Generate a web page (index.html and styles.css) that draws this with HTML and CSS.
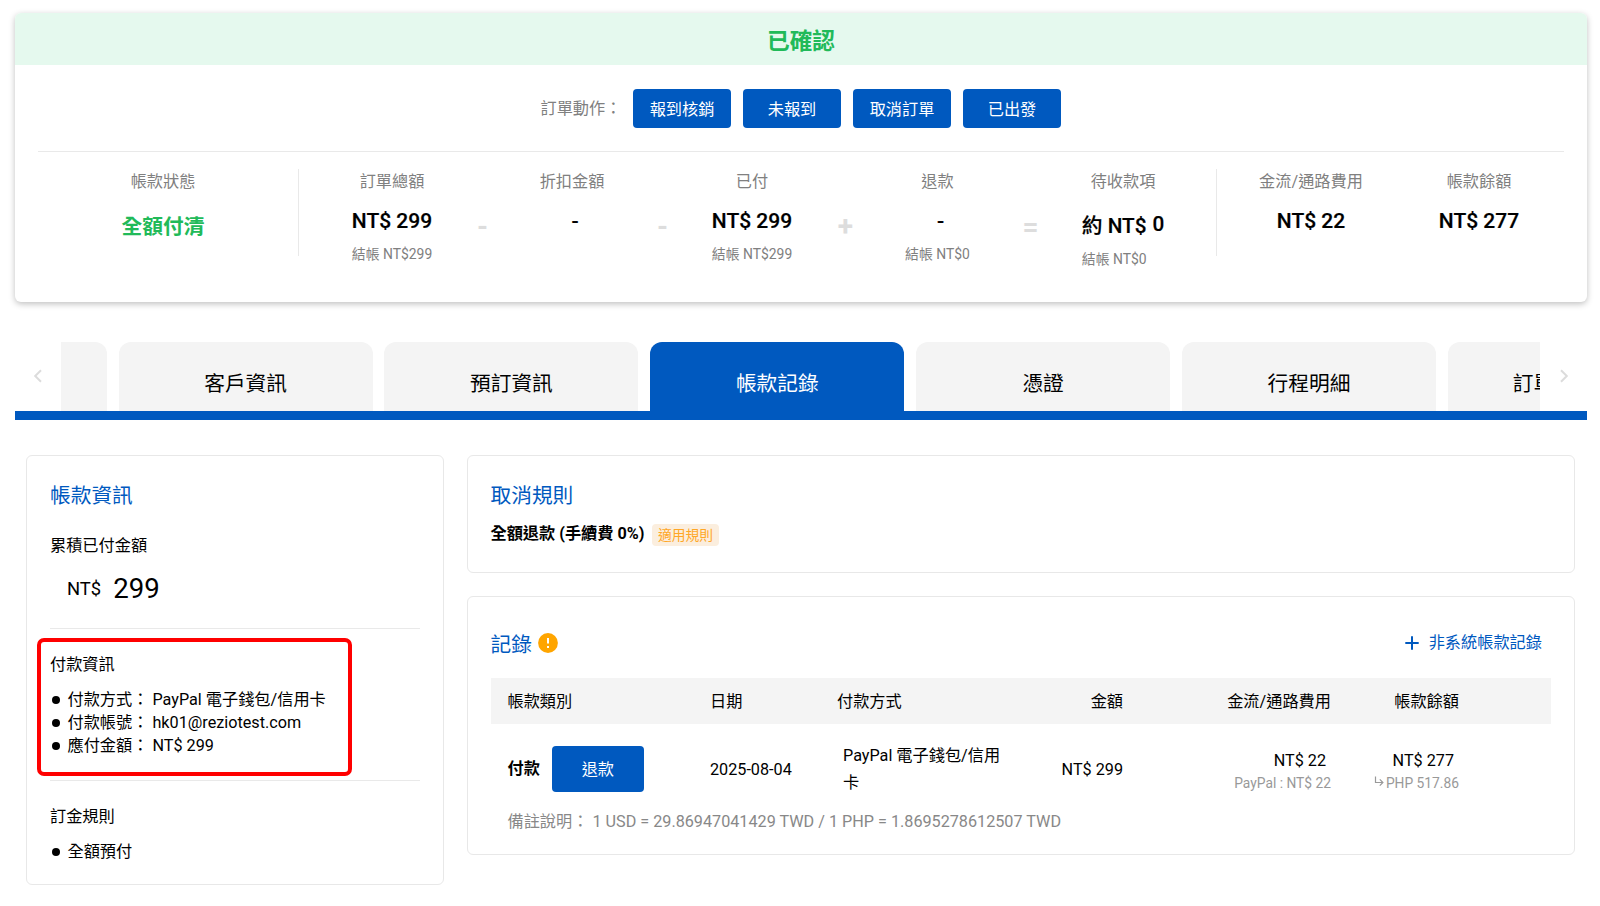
FILE: index.html
```
<!DOCTYPE html>
<html lang="zh-Hant">
<head>
<meta charset="utf-8">
<title>訂單</title>
<link rel="stylesheet" href="styles.css">
</head>
<body>
<section class="summary">
  <div class="summary-head">已確認</div>
  <div class="actions">
    <span class="actions-label">訂單動作：</span>
    <button class="btn">報到核銷</button>
    <button class="btn">未報到</button>
    <button class="btn">取消訂單</button>
    <button class="btn">已出發</button>
  </div>
  <div class="figures">
    <div class="fig status"><div class="lbl">帳款狀態</div><div class="state">全額付清</div></div>
    <div class="rule"></div>
    <div class="fig"><div class="lbl">訂單總額</div><div class="num">NT$ 299</div><div class="sub">結帳 NT$299</div></div>
    <div class="op">-</div>
    <div class="fig"><div class="lbl">折扣金額</div><div class="num dash">-</div></div>
    <div class="op">-</div>
    <div class="fig"><div class="lbl">已付</div><div class="num">NT$ 299</div><div class="sub">結帳 NT$299</div></div>
    <div class="op">+</div>
    <div class="fig"><div class="lbl">退款</div><div class="num dash">-</div><div class="sub">結帳 NT$0</div></div>
    <div class="op">=</div>
    <div class="fig due"><div class="lbl">待收款項</div><div class="due-body"><div class="due-num"><span>約 NT$</span><span class="due-zero">0</span></div><div class="sub">結帳 NT$0</div></div></div>
    <div class="rule"></div>
    <div class="fig"><div class="lbl">金流/通路費用</div><div class="num">NT$ 22</div></div>
    <div class="fig"><div class="lbl">帳款餘額</div><div class="num">NT$ 277</div></div>
  </div>
</section>

<nav class="tabs">
  <svg class="chev" viewBox="0 0 10 14"><path d="M8 1.2 2.2 7 8 12.8"/></svg>
  <div class="tab-view">
    <div class="tab cut-left"></div>
    <div class="tab">客戶資訊</div>
    <div class="tab">預訂資訊</div>
    <div class="tab active">帳款記錄</div>
    <div class="tab">憑證</div>
    <div class="tab">行程明細</div>
    <div class="tab cut-right">訂單</div>
  </div>
  <svg class="chev" viewBox="0 0 10 14"><path d="M2 1.2 7.8 7 2 12.8"/></svg>
</nav>

<main class="content">
  <aside class="card info">
    <h2 class="title">帳款資訊</h2>
    <div class="info-label">累積已付金額</div>
    <div class="paid"><span class="cur">NT$</span><span class="amt">299</span></div>
    <section class="block pay">
      <div class="info-label">付款資訊</div>
      <ul class="list">
        <li>付款方式： PayPal 電子錢包/信用卡</li>
        <li>付款帳號： hk01@reziotest.com</li>
        <li>應付金額： NT$ 299</li>
      </ul>
      <div class="highlight"></div>
    </section>
    <section class="block deposit">
      <div class="info-label">訂金規則</div>
      <ul class="list"><li>全額預付</li></ul>
    </section>
  </aside>
  <div class="right">
    <section class="card cancel">
      <h2 class="title">取消規則</h2>
      <div class="policy"><span class="policy-text">全額退款 (手續費 0%)</span><span class="tag">適用規則</span></div>
    </section>
    <section class="card records">
      <div class="rec-head">
        <h2 class="title">記錄</h2>
        <svg class="warn" viewBox="0 0 20 20"><circle cx="10" cy="10" r="9.9" fill="#ffa500"/><path d="M10 5v5.6M10 13.1v2" stroke="#fff" stroke-width="2"/></svg>
        <a class="add"><svg class="plus" viewBox="0 0 14 14"><path d="M7 .3v13.4M.3 7h13.4"/></svg>非系統帳款記錄</a>
      </div>
      <div class="row thead">
        <div>帳款類別</div><div>日期</div><div>付款方式</div><div class="r">金額</div><div class="r">金流/通路費用</div><div class="r">帳款餘額</div>
      </div>
      <div class="row line">
        <div class="kind"><b>付款</b><button class="btn refund">退款</button></div>
        <div class="date">2025-08-04</div>
        <div class="method">PayPal 電子錢包/信用卡</div>
        <div class="r date">NT$ 299</div>
        <div class="r pair"><div class="main">NT$ 22</div><div class="small">PayPal : NT$ 22</div></div>
        <div class="r pair"><div class="main">NT$ 277</div><div class="small"><svg class="turn" viewBox="0 0 10 11"><path d="M1.5 .5V6.5H8.6M5.8 3.4 8.9 6.5 5.8 9.6"/></svg>PHP 517.86</div></div>
      </div>
      <div class="note">備註說明： 1 USD = 29.86947041429 TWD / 1 PHP = 1.8695278612507 TWD</div>
    </section>
  </div>
</main>
</body>
</html>
```
FILE: styles.css
```
* { box-sizing: border-box; }
body {
  margin: 0;
  padding: 13px 13px 0 15px;
  height: 906px;
  overflow: hidden;
  background: #fff;
  color: #000;
  font-family: Roboto, "Noto Sans CJK TC", sans-serif;
  font-size: 16.2px;
  line-height: 24px;
}
h2 { margin: 0; font-weight: 400; }

.summary {
  height: 288.5px;
  border-radius: 6px;
  overflow: hidden;
  box-shadow: 0 2px 6px rgba(0, 0, 0, .25);
}
.summary-head {
  height: 52.4px;
  background: #e5f9ee;
  color: #21ba59;
  font-size: 22.7px;
  font-weight: 700;
  line-height: 57px;
  text-align: center;
}
.actions {
  display: flex;
  align-items: center;
  gap: 12px;
  margin: 0 23px;
  padding-left: 502px;
  height: 86.6px;
  border-bottom: 1px solid #e9e9e9;
}
.actions-label { width: 81px; padding: 2px 0 0 .5px; color: #808080; white-space: nowrap; }
.btn {
  width: 98px;
  height: 39px;
  padding: 1px 0 0;
  border: 0;
  border-radius: 4px;
  background: #0059bf;
  color: #fff;
  font: inherit;
  line-height: 39px;
}
.figures {
  display: grid;
  grid-template-columns: 270px 1px 140px 40px 140px 40px 140px 46px 139px 46px 140px 1px 140px 140px;
  margin-left: 13px;
  padding-top: 17px;
}
.figures > :nth-child(3) { margin-left: 23px; margin-right: -23px; }
.figures > :nth-child(n+4):nth-child(-n+11) { margin-left: 23px; margin-right: -23px; }
.figures > :nth-child(12) { margin-left: 46px; }
.figures > :nth-child(13) { margin-left: 70px; margin-right: -70px; }
.figures > :nth-child(14) { margin-left: 98px; margin-right: -98px; }
.fig { display: flex; flex-direction: column; align-items: center; padding-top: 1px; }
.lbl { height: 24px; color: #808080; white-space: nowrap; }
.state { margin-top: 19px; color: #21ba59; font-size: 20.7px; font-weight: 700; line-height: 28px; }
.num { margin-top: 13px; font-size: 21px; font-weight: 500; line-height: 28px; color: #000; -webkit-text-stroke: .2px #000; }
.dash { padding-left: 6px; }
.sub { margin-top: 8px; color: #808080; font-size: 13.9px; line-height: 22px; }
.rule { width: 1px; height: 87px; background: #e9e9e9; }
.op { padding: 44px 0 0 1px; color: #ddd; font-size: 28px; font-weight: 700; line-height: 28px; text-align: center; }
.due-num { display: flex; margin-top: 18px; font-size: 20.7px; font-weight: 500; line-height: 28px; color: #000; -webkit-text-stroke: .2px #000; }
.due .sub { margin-top: 8px; }
.due-zero { margin: -2px 0 0 6px; }

.tabs {
  display: flex;
  align-items: flex-start;
  justify-content: space-between;
  height: 78px;
  margin-top: 40.5px;
  padding: 0 18px;
  border-bottom: 9px solid #0059bf;
}
.chev { width: 10px; height: 14px; margin-top: 27px; fill: none; stroke: #dcdcdc; stroke-width: 2; }
.tab-view { display: flex; gap: 11.85px; width: 1479.5px; height: 69px; overflow: hidden; margin-right: 1px; }
.tab {
  flex: none;
  width: 254px;
  border-radius: 12px 12px 0 0;
  background: #f4f4f4;
  font-size: 20.7px;
  line-height: 85px;
  text-align: center;
}
.tab.active { background: #0059bf; color: #fff; }
.tab.cut-left { width: 46px; border-top-left-radius: 0; }
.tab.cut-right { padding-left: 65px; text-align: left; }

.content { display: flex; gap: 23px; align-items: flex-start; margin: 35px 12px 0 11px; }
.card { border: 1px solid #e8e8e8; border-radius: 6px; padding: 0 23px; }
.title { color: #0059bf; font-size: 20.7px; line-height: 30px; }
.info { width: 417.5px; height: 430px; padding-top: 25px; }
.info .info-label { margin-top: 23px; }
.paid { display: flex; align-items: center; gap: 12px; height: 57px; padding: 4px 0 0 17px; line-height: 40px; }
.cur { font-size: 18.4px; }
.amt { font-size: 27.6px; }
.block { position: relative; border-top: 1px solid #e9e9e9; }
.pay { height: 152px; margin-top: 13px; }
.pay .info-label, .deposit .info-label { margin-top: 24px; }
.list { list-style: none; margin: 11px 0 0; padding: 0; line-height: 23px; }
.list li { display: flex; align-items: center; white-space: pre; }
.list li::before { content: ""; width: 8px; height: 8px; margin: 0 8px 0 1.5px; border-radius: 50%; background: #000; }
.highlight { position: absolute; left: -13px; top: 9px; width: 315px; height: 138px; border: 4px solid #f00; border-radius: 7px; }

.right { flex: 1; }
.cancel { height: 118px; padding-top: 25px; }
.policy { display: flex; align-items: center; margin-top: 10px; }
.policy-text { font-weight: 700; }
.tag { height: 22px; margin: 3px 0 0 8px; padding: 0 5.5px; border-radius: 4px; background: #fbeede; color: #ffa726; font-size: 13.8px; line-height: 22px; }
.records { height: 259px; margin-top: 23px; padding-top: 33px; }
.rec-head { display: flex; align-items: center; height: 30px; margin-bottom: 18px; }
.warn { width: 20px; height: 20px; margin: -4px 0 0 6px; }
.add { display: flex; align-items: center; gap: 10px; margin: -4px 9px 0 auto; color: #0059bf; }
.plus { width: 14px; height: 14px; fill: none; stroke: #0059bf; stroke-width: 2; }
.row {
  display: grid;
  grid-template-columns: 202.5px 127px 180px 106px 208px 128px;
  align-items: center;
  padding-left: 17px;
}
.thead { height: 46px; padding-top: 2px; background: #f4f4f4; }
.r { text-align: right; }
.line { height: 90px; }
.kind { display: flex; align-items: center; gap: 12px; }
.kind b { font-weight: 700; }
.refund { width: 92px; height: 46px; line-height: 46px; }
.date { padding-top: 1px; }
.method { margin-left: 6px; margin-top: -1px; width: 160px; line-height: 27px; }
.pair { padding-top: 6px; }
.pair .main { padding-right: 5px; line-height: 22px; }
.small { color: #999; font-size: 13.8px; line-height: 22px; }
.turn { width: 10px; height: 11px; margin-right: 2px; fill: none; stroke: #999; stroke-width: 1.2; vertical-align: 1px; }
.note { margin-left: 17px; margin-top: -4px; color: #888; }
```
